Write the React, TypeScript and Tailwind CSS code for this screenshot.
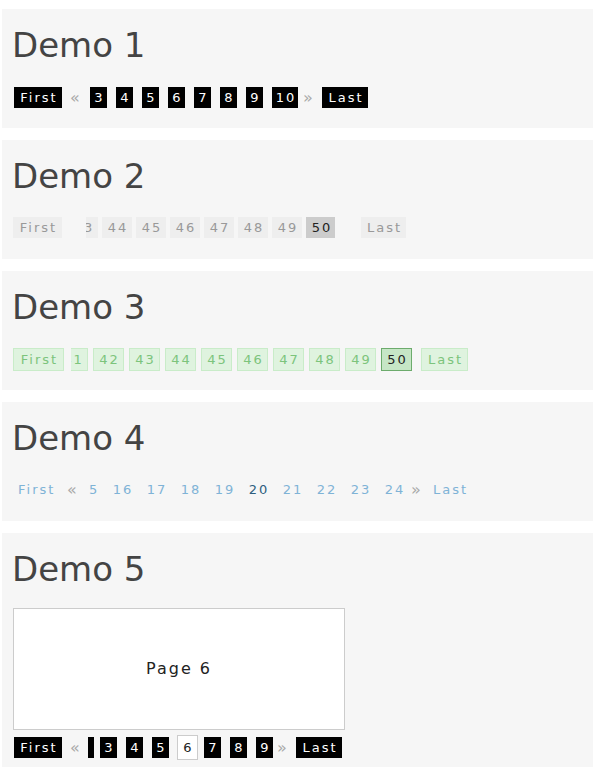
import React from "react";

const font = { fontFamily: '"DejaVu Sans", Verdana, sans-serif' };

function Panel({ title, children }: { title: string; children: React.ReactNode }) {
  return (
    <div className="ml-[2px] mb-[12px] bg-[#f6f6f6] pl-[11px] pt-[16px] h-[119px]">
      <div className="text-[34px] leading-[40px] text-[#444] tracking-normal -ml-[1px]">{title}</div>
      {children}
    </div>
  );
}

function BlackBox({ t, w }: { t: string; w?: string }) {
  return (
    <span className={`inline-flex h-[21px] shrink-0 items-center justify-center bg-black text-white pl-[4px] pr-[2px] ${w ?? ""}`}>
      {t}
    </span>
  );
}

const arrow = "text-[16px] leading-[21px] text-[#aaa] tracking-normal";

export default function App() {
  return (
    <div style={font} className="pt-[9px] bg-white text-[13px] tracking-[2px]">
      <Panel title="Demo 1">
        <div className="mt-[22px] flex items-center h-[21px] pl-[1px]">
          <BlackBox t="First" w="w-[48px]" />
          <span className={`ml-[8px] w-[9px] ${arrow}`}>«</span>
          <div className="ml-[11px] flex gap-[9px]">
            {["3", "4", "5", "6", "7", "8", "9"].map((n) => (
              <BlackBox key={n} t={n} w="w-[17px]" />
            ))}
            <BlackBox t="10" w="w-[26px]" />
          </div>
          <span className={`ml-[5px] w-[10px] ${arrow}`}>»</span>
          <span className="ml-[9px] flex">
            <BlackBox t="Last" w="w-[46px]" />
          </span>
        </div>
      </Panel>

      <Panel title="Demo 2">
        <div className="mt-[21px] flex items-center h-[21px]">
          <span className="inline-flex h-[21px] w-[49px] items-center justify-center bg-[#eee] text-[#999] pl-[2px]">First</span>
          <div className="ml-[24px] w-[249px] overflow-hidden">
            <div className="flex gap-[4px] -ml-[18px]">
              {["43", "44", "45", "46", "47", "48", "49", "50"].map((n) => (
                <span
                  key={n}
                  className={`inline-flex h-[21px] w-[30px] shrink-0 items-center justify-center pl-[2px] ${
                    n === "50" ? "bg-[#ccc] text-[#222]" : "bg-[#eee] text-[#999]"
                  }`}
                >
                  {n}
                </span>
              ))}
            </div>
          </div>
          <span className="ml-[26px] inline-flex h-[21px] w-[45px] items-center justify-center bg-[#eee] text-[#999] pl-[2px]">Last</span>
        </div>
      </Panel>

      <Panel title="Demo 3">
        <div className="mt-[21px] flex items-center h-[23px]">
          <span className="inline-flex h-[23px] w-[51px] items-center justify-center border border-[#c9ecc9] bg-[#dff3df] text-[#7cc47c] pl-[2px]">First</span>
          <div className="ml-[7px] w-[341px] overflow-hidden">
            <div className="flex gap-[5px] -ml-[14px]">
              {["41", "42", "43", "44", "45", "46", "47", "48", "49", "50"].map((n) => (
                <span
                  key={n}
                  className={`inline-flex h-[23px] w-[31px] shrink-0 items-center justify-center border pl-[2px] ${
                    n === "50"
                      ? "bg-[#c6e6c6] border-[#6cab6c] text-[#222]"
                      : "bg-[#dff3df] border-[#c9ecc9] text-[#7cc47c]"
                  }`}
                >
                  {n}
                </span>
              ))}
            </div>
          </div>
          <span className="ml-[9px] inline-flex h-[23px] w-[47px] items-center justify-center border border-[#c9ecc9] bg-[#dff3df] text-[#7cc47c] pl-[2px]">Last</span>
        </div>
      </Panel>

      <Panel title="Demo 4">
        <div className="mt-[21px] flex items-center h-[21px] text-[#7fb3d6]">
          <span className="ml-[5px] w-[49px] shrink-0">First</span>
          <span className={`w-[21px] shrink-0 ${arrow}`}>«</span>
          <div className="w-[323px] shrink-0 overflow-hidden">
            <div className="flex -ml-[17px]">
              {["15", "16", "17", "18", "19", "20", "21", "22", "23", "24"].map((n) => (
                <span
                  key={n}
                  className={`inline-flex w-[34px] shrink-0 justify-center pl-[2px] ${n === "20" ? "text-[#2e5e7e]" : ""}`}
                >
                  {n}
                </span>
              ))}
            </div>
          </div>
          <span className={`w-[22px] shrink-0 ${arrow}`}>»</span>
          <span className="shrink-0">Last</span>
        </div>
      </Panel>

      <div className="ml-[2px] bg-[#f6f6f6] pl-[11px] pt-[16px] pb-[10px]">
        <div className="text-[34px] leading-[40px] text-[#444] tracking-normal -ml-[1px]">Demo 5</div>
        <div className="mt-[19px] flex h-[122px] w-[332px] items-center justify-center border border-[#ccc] bg-white text-[16px] text-[#222]">
          Page 6
        </div>
        <div className="mt-[5px] flex items-center h-[25px] pl-[1px]">
          <BlackBox t="First" w="w-[48px]" />
          <span className={`ml-[8px] w-[9px] ${arrow}`}>«</span>
          <span className="ml-[9px] h-[21px] w-[6px] shrink-0 bg-black"></span>
          <span className="ml-[6px] flex"><BlackBox t="3" w="w-[17px]" /></span>
          <span className="ml-[9px] flex"><BlackBox t="4" w="w-[17px]" /></span>
          <span className="ml-[9px] flex"><BlackBox t="5" w="w-[17px]" /></span>
          <span className="ml-[8px] inline-flex h-[25px] w-[21px] shrink-0 items-center justify-center border border-[#ccc] bg-white text-[#222] pl-[2px]">
            6
          </span>
          <span className="ml-[6px] flex"><BlackBox t="7" w="w-[17px]" /></span>
          <span className="ml-[9px] flex"><BlackBox t="8" w="w-[17px]" /></span>
          <span className="ml-[9px] flex"><BlackBox t="9" w="w-[17px]" /></span>
          <span className={`ml-[4px] w-[10px] ${arrow}`}>»</span>
          <span className="ml-[9px] flex">
            <BlackBox t="Last" w="w-[46px]" />
          </span>
        </div>
      </div>
    </div>
  );
}
